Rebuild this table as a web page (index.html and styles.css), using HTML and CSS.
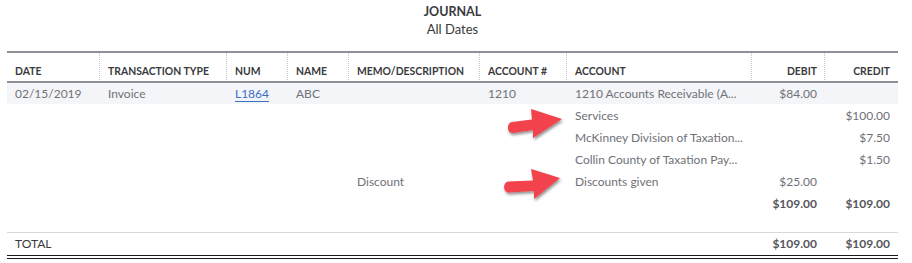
FILE: index.html
```html
<!DOCTYPE html>
<html>
<head>
<meta charset="utf-8">
<link rel="stylesheet" href="styles.css">
</head>
<body>
<div class="report">
  <div class="title">
    <div class="name">JOURNAL</div>
    <div class="range">All Dates</div>
  </div>
  <table class="grid">
    <colgroup>
      <col class="c-date"><col class="c-type"><col class="c-num"><col class="c-name"><col class="c-memo"><col class="c-acno"><col class="c-acct"><col class="c-debit"><col class="c-credit">
    </colgroup>
    <thead>
      <tr>
        <th>DATE</th><th>TRANSACTION TYPE</th><th>NUM</th><th>NAME</th><th>MEMO/DESCRIPTION</th><th>ACCOUNT #</th><th>ACCOUNT</th><th class="num">DEBIT</th><th class="num last">CREDIT</th>
      </tr>
    </thead>
    <tbody>
      <tr class="first">
        <td>02/15/2019</td><td>Invoice</td><td><a class="link" href="#">L1864</a></td><td>ABC</td><td></td><td>1210</td><td>1210 Accounts Receivable (A...</td><td class="num">$84.00</td><td class="num"></td>
      </tr>
      <tr>
        <td></td><td></td><td></td><td></td><td></td><td></td><td>Services</td><td class="num"></td><td class="num">$100.00</td>
      </tr>
      <tr>
        <td></td><td></td><td></td><td></td><td></td><td></td><td>McKinney Division of Taxation...</td><td class="num"></td><td class="num">$7.50</td>
      </tr>
      <tr>
        <td></td><td></td><td></td><td></td><td></td><td></td><td>Collin County of Taxation Pay...</td><td class="num"></td><td class="num">$1.50</td>
      </tr>
      <tr>
        <td></td><td></td><td></td><td></td><td>Discount</td><td></td><td>Discounts given</td><td class="num">$25.00</td><td class="num"></td>
      </tr>
      <tr class="sub">
        <td></td><td></td><td></td><td></td><td></td><td></td><td></td><td class="num">$109.00</td><td class="num">$109.00</td>
      </tr>
      <tr class="spacer"><td colspan="9"></td></tr>
    </tbody>
    <tfoot>
      <tr class="total">
        <td>TOTAL</td><td></td><td></td><td></td><td></td><td></td><td></td><td class="num">$109.00</td><td class="num">$109.00</td>
      </tr>
    </tfoot>
  </table>

  <svg class="arrow a1" width="64" height="40" viewBox="0 0 64 40">
    <defs>
      <filter id="sh" x="-20%" y="-20%" width="150%" height="160%">
        <feDropShadow dx="1" dy="2" stdDeviation="1.5" flood-color="#000" flood-opacity="0.45"/>
      </filter>
    </defs>
    <path filter="url(#sh)" fill="#f2424b" d="M8 20 L28 17.5 L27 7 L58 17 L29 36 L29 28 L9 31 C2.5 32 2.5 20.5 8 20 Z"/>
  </svg>
  <svg class="arrow a2" width="64" height="44" viewBox="0 0 64 44">
    <path filter="url(#sh)" fill="#f2424b" d="M9 16.5 L33 15.5 L31 4 L60 13 L34 34 L34 26 L9 27.5 C2.5 27.5 2.5 16.5 9 16.5 Z"/>
  </svg>
</div>
</body>
</html>
```
FILE: styles.css
```css
html, body {
  margin: 0;
  padding: 0;
  background: #fff;
}
body {
  font-family: Lato, "Open Sans", sans-serif;
  color: #707177;
  font-size: 12px;
}
.report {
  position: relative;
  padding: 4px 14px 0 7px;
}
.title {
  text-align: center;
  color: #393a3d;
  height: 47px;
}
.name {
  font-weight: bold;
  font-size: 12.5px;
  line-height: 16px;
}
.range {
  font-size: 13px;
  line-height: 18px;
}
.grid {
  width: 891px;
  border-collapse: collapse;
  table-layout: fixed;
}
.c-date { width: 93px; }
.c-type { width: 127px; }
.c-num { width: 61px; }
.c-name { width: 61px; }
.c-memo { width: 131px; }
.c-acno { width: 87px; }
.c-acct { width: 185px; }
.c-debit { width: 73px; }
.c-credit { width: 73px; }
thead tr {
  border-top: 2px solid #8d9096;
  border-bottom: 2px solid #8d9096;
}
th {
  text-align: left;
  font-weight: bold;
  font-size: 10.4px;
  color: #393a3d;
  height: 30px;
  padding: 8px 8px 0 8px;
  box-sizing: border-box;
  background-image: linear-gradient(#c4c6cb 50%, transparent 50%);
  background-size: 1px 2px;
  background-repeat: repeat-y;
  background-position: right 0 top 6px;
  white-space: nowrap;
}
th.last { background-image: none; }
th.num, td.num { text-align: right; }
td {
  height: 22px;
  padding: 0 8px;
  box-sizing: border-box;
  white-space: nowrap;
  overflow: hidden;
}
tr.first td { background: #f4f5f8; }
.link {
  color: #3b6fc6;
  text-decoration: underline;
  text-underline-offset: 3px;
}
tr.sub td {
  font-weight: bold;
  color: #55565c;
}
tr.spacer td { height: 18px; }
tr.total { border-top: 1px solid #d4d7dc; border-bottom: 4px double #1a1a1a; }
tr.total td {
  height: 25px;
  color: #393a3d;
}
tr.total td.num { font-weight: bold; color: #55565c; }
.arrow {
  position: absolute;
  overflow: visible;
}
.a1 { left: 504px; top: 102px; }
.a2 { left: 500px; top: 165px; }
```
